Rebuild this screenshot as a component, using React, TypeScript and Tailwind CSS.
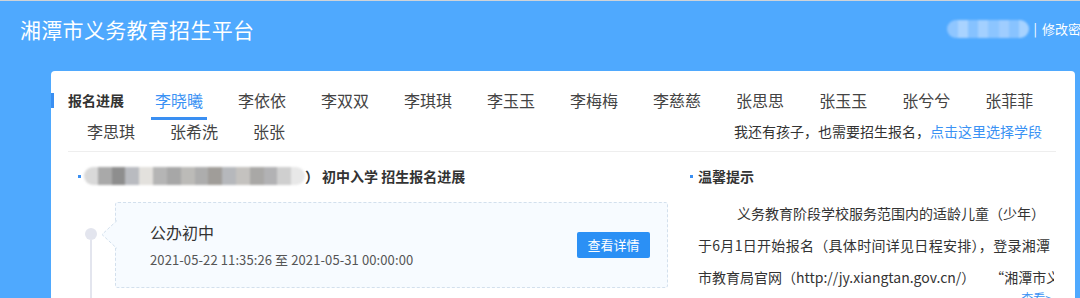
const font = '[font-family:"Noto_Sans_CJK_SC","Liberation_Sans",sans-serif]'

const row1 = ['李晓曦', '李依依', '李双双', '李琪琪', '李玉玉', '李梅梅', '李慈慈', '张思思', '张玉玉', '张兮兮', '张菲菲']
const row2 = ['李思琪', '张希洗', '张张']

function Tab({ name, active }: { name: string; active?: boolean }) {
  return (
    <div
      className={`relative ml-[15px] mr-[12px] h-[32px] shrink-0 px-[4px] text-[16px] leading-[24px] ${
        active ? 'text-[#3a92f4]' : 'text-[#444]'
      }`}
    >
      {name}
      {active && <div className="absolute bottom-0 left-0 right-0 h-[3px] bg-[#3a8ff2]" />}
    </div>
  )
}

function Blur({ w, tones }: { w: string; tones: string[] }) {
  return (
    <div className={`flex h-[18px] overflow-hidden rounded-[9px] blur-[1.2px] ${w}`}>
      {tones.map((t, i) => (
        <div key={i} className="flex-1" style={{ background: t }} />
      ))}
    </div>
  )
}

export default function App() {
  return (
    <div className={`h-[298px] w-full overflow-hidden border-t border-[#cfd3d8] bg-[#4fa9fe] ${font}`}>
      {/* header */}
      <div className="flex h-[55px] items-center overflow-hidden px-[20px]">
        <div className="text-[21px] leading-[28px] tracking-[0.3px] text-white">湘潭市义务教育招生平台</div>
        <div className="ml-auto mr-[-34px] flex shrink-0 items-center">
          <Blur
            w="w-[82px]"
            tones={['#8fc6ff', '#a9d3ff', '#86c2ff', '#a3d0ff', '#8cc5ff', '#9fcdff', '#88c3ff', '#a6d2ff']}
          />
          <span className="ml-[4px] text-[13px] leading-[16px] text-white">|</span>
          <span className="ml-[5px] text-[13px] leading-[16px] text-white">修改密码</span>
        </div>
      </div>

      {/* card */}
      <div className="relative ml-[51px] mt-[15px] h-[400px] w-[1024px] rounded-[4px] bg-white pl-[17px] pr-[19px] pt-[17px]">
        <div className="absolute left-0 top-[22px] h-[15px] w-[3px] bg-[#3a8ff2]" />

        <div className="flex items-start">
          <div className="mr-[12px] w-[56px] shrink-0 text-[14px] font-bold leading-[24px] text-[#333]">报名进展</div>
          {row1.map((n, i) => (
            <Tab key={n} name={n} active={i === 0} />
          ))}
        </div>
        <div className="flex h-[22px] items-center">
          {row2.map((n) => (
            <div key={n} className="ml-[15px] mr-[12px] px-[4px] text-[16px] leading-[22px] text-[#444]">
              {n}
            </div>
          ))}
          <div className="ml-auto mr-[14px] text-[14px] leading-[22px] text-[#333]">
            我还有孩子，也需要招生报名，<span className="text-[#3a92f4]">点击这里选择学段</span>
          </div>
        </div>

        <div className="mt-[9px] h-px bg-[#eeeeee]" />

        <div className="flex pt-[14px]">
          {/* left column */}
          <div className="w-[600px] shrink-0">
            <div className="flex h-[20px] items-center pl-[10px] text-[14px] font-bold text-[#333]">
              <div className="mr-[3px] h-[3px] w-[3px] bg-[#3a8ff2]" />
              <Blur
                w="w-[221px]"
                tones={['#d9d9d9', '#a9a9a9', '#8e8e8e', '#b9bbc0', '#e3e1dd', '#b5b5b5', '#a7a7a7', '#bcbbb8', '#adadad', '#a09d99', '#b6b8bc', '#c4c2bf', '#a9a8a6', '#b2b2b4', '#cfcfcf', '#e8e8e8']}
              />
              <span className="w-[17px] shrink-0">）</span>
              <span>初中入学 招生报名进展</span>
            </div>

            <div className="mt-[16px] flex h-[120px]">
              <div className="ml-[17px] mr-[18px] flex w-[12px] shrink-0 flex-col items-center">
                <div className="h-[26px]" />
                <div className="h-[12px] w-[12px] rounded-full bg-[#e3e5ee]" />
                <div className="w-[2px] flex-1 bg-[#e3e5ee]" />
              </div>
              <div className="relative flex h-[86px] flex-1 items-center justify-between rounded-[3px] border border-dashed border-[#d3e0ed] bg-[#f7fbff] pl-[34px] pr-[17px]">
                <svg className="absolute left-[-15px] top-[17px]" width="16" height="29" viewBox="0 0 16 29">
                  <polygon points="16,0 1,14.5 16,29" fill="#f7fbff" />
                  <polyline points="16,0.5 1,14.5 16,28.5" fill="none" stroke="#d3e0ed" strokeDasharray="3 2" />
                </svg>
                <div>
                  <div className="text-[16px] leading-[24px] text-[#333]">公办初中</div>
                  <div className="mt-[6px] text-[13px] leading-[20px] tracking-[0.1px] text-[#555]">
                    2021-05-22 11:35:26 至 2021-05-31 00:00:00
                  </div>
                </div>
                <button className="h-[26px] w-[73px] rounded-[2px] bg-[#2b90f5] text-[13px] text-white">查看详情</button>
              </div>
            </div>
          </div>

          {/* right column */}
          <div className="ml-[22px] w-[366px] shrink-0">
            <div className="flex h-[20px] items-center text-[14px] font-bold text-[#333]">
              <div className="mr-[5px] h-[3px] w-[3px] bg-[#3a8ff2]" />
              温馨提示
            </div>
            <div className="mt-[11px] w-[364px] overflow-hidden pl-[8px] text-[14px] leading-[32px] text-[#333]">
              <div className="whitespace-nowrap pl-[39px]">义务教育阶段学校服务范围内的适龄儿童（少年）</div>
              <div className="whitespace-nowrap tracking-[0.3px]">于6月1日开始报名（具体时间详见日程安排），登录湘潭</div>
              <div className="whitespace-nowrap">
                市教育局官网（http://jy.xiangtan.gov.cn/）<span className="ml-[22px]">“湘潭市义务教育</span>
              </div>
            </div>
            <div className="mt-[-2px] pr-[4px] text-right text-[12px] leading-[14px] text-[#3a92f4]">查看&gt;</div>
          </div>
        </div>
      </div>
    </div>
  )
}
